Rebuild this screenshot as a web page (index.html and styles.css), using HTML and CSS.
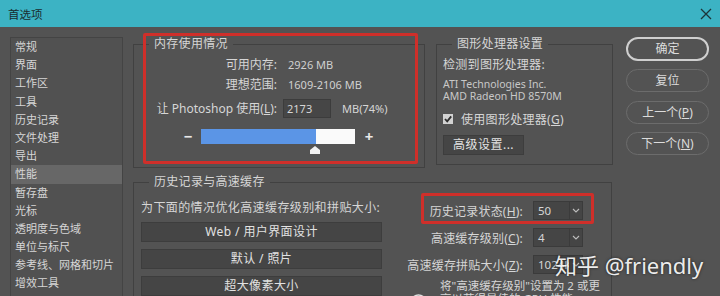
FILE: index.html
```html
<!DOCTYPE html>
<html lang="zh-CN">
<head>
    <meta charset="UTF-8">
    <title>首选项</title>
    <link rel="stylesheet" href="styles.css">
</head>
<body>
    <div class="titlebar">
        <span class="title">首选项</span>
        <svg class="close" width="12" height="12" viewBox="0 0 12 12">
            <path d="M1 1 L11 11 M11 1 L1 11" stroke="#1d3539" stroke-width="1.3" fill="none"/>
        </svg>
    </div>

    <div class="main">
        <ul class="sidebar">
            <li>常规</li>
            <li>界面</li>
            <li>工作区</li>
            <li>工具</li>
            <li>历史记录</li>
            <li>文件处理</li>
            <li>导出</li>
            <li class="active">性能</li>
            <li>暂存盘</li>
            <li>光标</li>
            <li>透明度与色域</li>
            <li>单位与标尺</li>
            <li>参考线、网格和切片</li>
            <li>增效工具</li>
        </ul>

        <div class="content">
            <div class="top-row">
                <div class="group memory">
                    <span class="legend">内存使用情况</span>
                    <div class="mem-row">
                        <span class="mem-label">可用内存:</span>
                        <span class="mem-value">2926 MB</span>
                    </div>
                    <div class="mem-row">
                        <span class="mem-label">理想范围:</span>
                        <span class="mem-value">1609-2106 MB</span>
                    </div>
                    <div class="mem-row use-row">
                        <span class="mem-label">让 Photoshop 使用(<u>L</u>):</span>
                        <span class="mem-input">2173</span>
                        <span class="mem-pct">MB(74%)</span>
                    </div>
                    <div class="slider">
                        <span class="step">−</span>
                        <div class="bar">
                            <div class="bar-fill" style="width: 74.5%"></div>
                            <svg class="thumb" width="10" height="8" viewBox="0 0 10 8">
                                <polygon points="5,0 10,4 10,8 0,8 0,4" fill="#f2f2f2"/>
                            </svg>
                        </div>
                        <span class="step">+</span>
                    </div>
                    <div class="highlight mem-highlight"></div>
                </div>

                <div class="group gpu">
                    <span class="legend">图形处理器设置</span>
                    <div class="gpu-title">检测到图形处理器:</div>
                    <div class="gpu-name">ATI Technologies Inc.</div>
                    <div class="gpu-name">AMD Radeon HD 8570M</div>
                    <label class="check-row">
                        <span class="checkbox">
                            <svg width="10" height="10" viewBox="0 0 10 10">
                                <path d="M2 5 L4.2 7.4 L8.2 2.4" stroke="#2e2e2e" stroke-width="1.8" fill="none"/>
                            </svg>
                        </span>
                        使用图形处理器(<u>G</u>)
                    </label>
                    <div class="flat-btn gpu-btn">高级设置...</div>
                </div>
            </div>

            <div class="group history">
                <span class="legend">历史记录与高速缓存</span>
                <div class="hist-left">
                    <div class="hist-hint">为下面的情况优化高速缓存级别和拼贴大小:</div>
                    <div class="flat-btn preset">Web / 用户界面设计</div>
                    <div class="flat-btn preset">默认 / 照片</div>
                    <div class="flat-btn preset">超大像素大小</div>
                </div>
                <div class="hist-right">
                    <div class="field-row">
                        <span class="field-label">历史记录状态(<u>H</u>):</span>
                        <div class="select">
                            <span class="select-value">50</span>
                            <span class="select-arrow">
                                <svg width="8" height="5" viewBox="0 0 8 5"><path d="M1 1 L4 4 L7 1" stroke="#bdbdbd" stroke-width="1.1" fill="none"/></svg>
                            </span>
                        </div>
                    </div>
                    <div class="field-row">
                        <span class="field-label">高速缓存级别(<u>C</u>):</span>
                        <div class="select">
                            <span class="select-value">4</span>
                            <span class="select-arrow">
                                <svg width="8" height="5" viewBox="0 0 8 5"><path d="M1 1 L4 4 L7 1" stroke="#bdbdbd" stroke-width="1.1" fill="none"/></svg>
                            </span>
                        </div>
                    </div>
                    <div class="field-row">
                        <span class="field-label">高速缓存拼贴大小(<u>Z</u>):</span>
                        <div class="select">
                            <span class="select-value">1024K</span>
                            <span class="select-arrow">
                                <svg width="8" height="5" viewBox="0 0 8 5"><path d="M1 1 L4 4 L7 1" stroke="#bdbdbd" stroke-width="1.1" fill="none"/></svg>
                            </span>
                        </div>
                    </div>
                    <div class="tip">
                        <svg class="tip-icon" width="17" height="17" viewBox="0 0 17 17">
                            <circle cx="8.5" cy="8.5" r="7.5" stroke="#e0e0e0" stroke-width="1.5" fill="none"/>
                            <path d="M8.5 7.5 V12.5 M8.5 4.5 V5.8" stroke="#e0e0e0" stroke-width="1.5"/>
                        </svg>
                        <p class="tip-text">将"高速缓存级别"设置为 2 或更<br>高以获得最佳的 GPU 性能。</p>
                    </div>
                </div>
                <div class="highlight hist-highlight"></div>
            </div>
        </div>

        <div class="actions">
            <div class="pill primary">确定</div>
            <div class="pill">复位</div>
            <div class="pill">上一个(<u>P</u>)</div>
            <div class="pill">下一个(<u>N</u>)</div>
        </div>
    </div>

    <div class="watermark">知乎 @friendly</div>
</body>
</html>
```

FILE: styles.css
```css
* {
    box-sizing: border-box;
}
body {
    margin: 0;
    width: 720px;
    height: 296px;
    overflow: hidden;
    position: relative;
    background: #535353;
    color: #d6d6d6;
    font-family: "Noto Sans", "Noto Sans CJK SC", sans-serif;
    font-size: 12px;
}
u {
    text-decoration: underline;
    text-underline-offset: 1px;
}

/* title bar */
.titlebar {
    height: 27px;
    background: #3cb3c4;
    display: flex;
    align-items: center;
    justify-content: space-between;
    padding: 0 8px;
    color: #1a2c30;
    font-size: 11.5px;
}

.main {
    display: flex;
    align-items: flex-start;
    padding: 10px 0 0 10px;
}

/* category list */
.sidebar {
    list-style: none;
    margin: 0;
    padding: 0;
    width: 113px;
    height: 270px;
    border: 1px solid #444;
    background: #515151;
    font-size: 11px;
}
.sidebar li {
    height: 18.2px;
    line-height: 18.2px;
    padding-left: 4px;
    white-space: nowrap;
}
.sidebar li.active {
    background: #676767;
}

.content {
    margin-left: 10px;
    width: 480px;
}
.top-row {
    display: flex;
    align-items: flex-start;
    margin-top: 7px;
}

/* group boxes */
.group {
    position: relative;
    border: 1px solid #414141;
}
.legend {
    position: absolute;
    top: -9px;
    left: 15px;
    padding: 0 5px;
    background: #535353;
    line-height: 16px;
    letter-spacing: 0.3px;
}
.highlight {
    position: absolute;
    border: 3px solid #cf2f2a;
    border-radius: 2px;
}

/* memory */
.memory {
    width: 292px;
    height: 124px;
    padding-top: 9px;
}
.mem-highlight {
    left: 9px;
    top: -12px;
    width: 275px;
    height: 131px;
}
.mem-row {
    display: flex;
    align-items: center;
    height: 20px;
}
.mem-label {
    width: 143px;
    text-align: right;
    white-space: nowrap;
}
.mem-value {
    margin-left: 11px;
    font-size: 11px;
    color: #d0d0d0;
}
.use-row {
    height: 24px;
    margin-top: 2px;
}
.mem-input {
    margin-left: 6px;
    width: 48px;
    height: 19px;
    line-height: 17px;
    padding-left: 3px;
    background: #464646;
    border: 1px solid #3c3c3c;
    font-size: 11px;
}
.mem-pct {
    margin-left: 11px;
    font-size: 11px;
}
.slider {
    display: flex;
    align-items: center;
    margin-top: 9px;
    padding-left: 49px;
}
.step {
    width: 10px;
    text-align: center;
    font-size: 15px;
    font-weight: bold;
    line-height: 15px;
    color: #e8e8e8;
}
.bar {
    position: relative;
    width: 154px;
    height: 15px;
    margin: 0 9px 0 8px;
    background: #fafafa;
}
.bar-fill {
    height: 100%;
    background: #5b95e6;
}
.thumb {
    position: absolute;
    left: 109px;
    top: 17px;
}

/* graphics processor */
.gpu {
    width: 177px;
    height: 121px;
    margin-left: 11px;
    padding: 11px 0 0 6px;
}
.gpu-title {
    line-height: 18px;
    letter-spacing: 0.3px;
}
.gpu-name {
    font-size: 10.5px;
    line-height: 12px;
    color: #c8c8c8;
}
.gpu-title + .gpu-name {
    margin-top: 4px;
}
.check-row {
    display: flex;
    align-items: center;
    height: 18px;
    margin-top: 8px;
    letter-spacing: 0.3px;
}
.checkbox {
    width: 10px;
    height: 10px;
    margin-right: 8px;
    background: #d2d2d2;
    display: flex;
}
.flat-btn {
    background: #454545;
    border: 1px solid #3d3d3d;
    color: #e2e2e2;
    text-align: center;
}
.gpu-btn {
    width: 81px;
    height: 20px;
    line-height: 18px;
    margin-top: 7px;
    letter-spacing: 0.5px;
}

/* history & cache */
.history {
    display: flex;
    width: 479px;
    height: 140px;
    margin-top: 14px;
}
.hist-highlight {
    left: 287px;
    top: 10px;
    width: 173px;
    height: 31px;
}
.hist-left {
    width: 248px;
    padding: 15px 0 0 7px;
}
.hist-hint {
    line-height: 20px;
    letter-spacing: 0.4px;
    white-space: nowrap;
}
.preset {
    height: 20px;
    line-height: 18px;
    margin-top: 4px;
    margin-bottom: 7px;
    letter-spacing: 0.4px;
}
.preset + .preset {
    margin-top: 0;
}
.hist-right {
    margin-left: 13px;
    padding-top: 18px;
}
.field-row {
    display: flex;
    align-items: center;
    height: 19px;
    margin-bottom: 8px;
}
.field-label {
    width: 128px;
    margin-right: 10px;
    text-align: right;
    white-space: nowrap;
    letter-spacing: 0.2px;
}
.select {
    display: flex;
    width: 50px;
    height: 19px;
    background: #454545;
    border: 1px solid #3b3b3b;
    font-size: 11.5px;
}
.select-value {
    flex: 1;
    padding-left: 4px;
    line-height: 17px;
    overflow: hidden;
}
.select-arrow {
    width: 13px;
    border-left: 1px solid #3b3b3b;
    display: flex;
    align-items: center;
    justify-content: center;
}
.tip {
    display: flex;
    align-items: flex-start;
    margin-top: -3px;
    padding-left: 15px;
}
.tip-icon {
    margin-top: 15px;
    flex-shrink: 0;
}
.tip-text {
    margin: 0 0 0 13px;
    font-size: 11.5px;
    line-height: 13px;
    white-space: nowrap;
}

/* dialog buttons */
.actions {
    margin-left: 13px;
    width: 83px;
}
.pill {
    height: 23px;
    line-height: 21px;
    margin-bottom: 8.5px;
    border: 1.5px solid #6c6c6c;
    border-radius: 12px;
    text-align: center;
    color: #dcdcdc;
    font-size: 12px;
}
.pill.primary {
    height: 24px;
    border: 2px solid #cfcfcf;
    line-height: 20px;
    margin-bottom: 8px;
}

.watermark {
    position: absolute;
    left: 555px;
    top: 248px;
    font-size: 22px;
    color: rgba(255, 255, 255, 0.92);
    text-shadow: 0 0 3px rgba(0, 0, 0, 0.6);
    white-space: nowrap;
}
```
